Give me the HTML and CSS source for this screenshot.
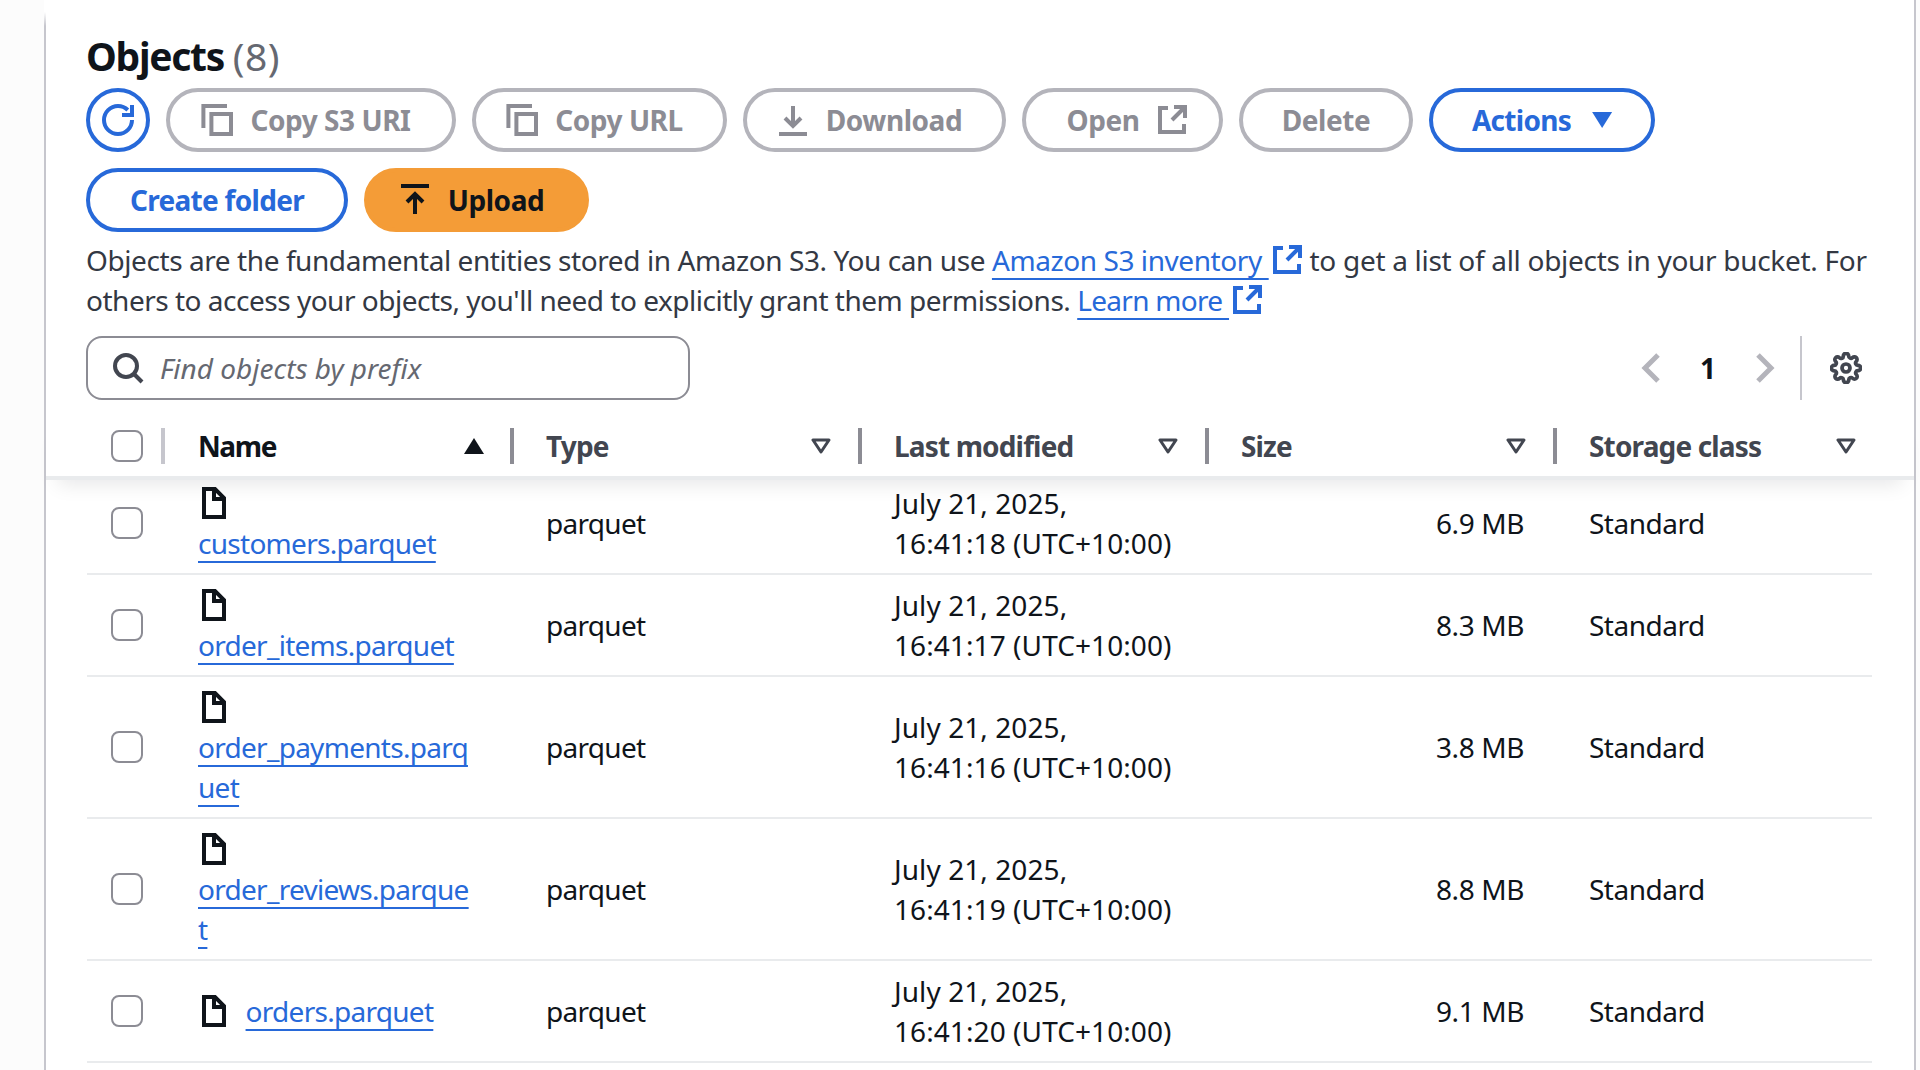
FILE: index.html
```html
<!DOCTYPE html>
<html lang="en">
<head>
    <meta charset="UTF-8">
    <title>Objects - S3 bucket</title>
    <link rel="stylesheet" href="styles.css">
</head>
<body>
    <svg class="sprite" xmlns="http://www.w3.org/2000/svg">
        <symbol id="i-refresh" viewBox="0 0 16 16"><path d="M15 8c0 3.870-3.130 7-7 7s-7-3.130-7-7 3.130-7 7-7c1.900 0 3.600.75 4.900 2"/><path d="M15 .5v5h-5"/></symbol>
        <symbol id="i-copy" viewBox="0 0 16 16"><path d="M1.200 12V1H13"/><path d="M5.200 5H15v10H5.200z"/></symbol>
        <symbol id="i-download" viewBox="0 0 16 16"><path d="M1 15h14"/><path d="M8 11V1"/><path d="M4 7l4 4 4-4"/></symbol>
        <symbol id="i-external" viewBox="0 0 16 16"><path d="M6 2H2v12h12v-4"/><path d="M9 1.500h5.500v5.500"/><path d="M14 2L8 8"/></symbol>
        <symbol id="i-upload" viewBox="0 0 16 16"><path d="M1 1h14"/><path d="M8 15V5"/><path d="M4 9l4-4 4 4"/></symbol>
        <symbol id="i-file" viewBox="0 0 16 16"><path d="M8.500 1H3v14h10V5.500z"/><path d="M8 1v5h5"/></symbol>
        <symbol id="i-search" viewBox="0 0 16 16"><circle cx="7" cy="7" r="5.500"/><path d="M11 11l4 4"/></symbol>
        <symbol id="i-left" viewBox="0 0 16 16"><path d="M11 1.500L4.500 8l6.500 6.500"/></symbol>
        <symbol id="i-right" viewBox="0 0 16 16"><path d="M5 1.500L11.500 8 5 14.500"/></symbol>
        <symbol id="i-filter" viewBox="0 0 20 16"><path d="M2 2h16l-8 12z"/></symbol>
        <symbol id="i-gear" viewBox="0 0 24 24"><circle cx="12" cy="12" r="3"/><path d="M19.400 15a1.650 1.650 0 0 0 .33 1.820l.06.06a2 2 0 0 1 0 2.830 2 2 0 0 1-2.830 0l-.06-.06a1.650 1.650 0 0 0-1.820-.33 1.650 1.650 0 0 0-1 1.510V21a2 2 0 0 1-2 2 2 2 0 0 1-2-2v-.09A1.650 1.650 0 0 0 9 19.400a1.650 1.650 0 0 0-1.820.33l-.06.06a2 2 0 0 1-2.830 0 2 2 0 0 1 0-2.830l.06-.06a1.650 1.650 0 0 0 .33-1.820 1.650 1.650 0 0 0-1.510-1H3a2 2 0 0 1-2-2 2 2 0 0 1 2-2h.09A1.650 1.650 0 0 0 4.600 9a1.650 1.650 0 0 0-.33-1.820l-.06-.06a2 2 0 0 1 0-2.830 2 2 0 0 1 2.830 0l.06.06a1.650 1.650 0 0 0 1.820.33H9a1.650 1.650 0 0 0 1-1.510V3a2 2 0 0 1 2-2 2 2 0 0 1 2 2v.09a1.650 1.650 0 0 0 1 1.510 1.650 1.650 0 0 0 1.820-.33l.06-.06a2 2 0 0 1 2.830 0 2 2 0 0 1 0 2.830l-.06.06a1.650 1.650 0 0 0-.33 1.820V9a1.650 1.650 0 0 0 1.510 1H21a2 2 0 0 1 2 2 2 2 0 0 1-2 2h-.09a1.650 1.650 0 0 0-1.510 1z"/></symbol>
    </svg>

    <main class="panel">
        <h1 class="title">Objects <span class="count">(8)</span></h1>

        <div class="toolbar">
            <button class="btn btn-icon btn-normal"><svg class="icon"><use href="#i-refresh"/></svg></button>
            <button class="btn btn-disabled btn-lead btn-copy-uri"><svg class="icon"><use href="#i-copy"/></svg>Copy S3 URI</button>
            <button class="btn btn-disabled btn-lead btn-copy-url"><svg class="icon"><use href="#i-copy"/></svg>Copy URL</button>
            <button class="btn btn-disabled btn-lead btn-download"><svg class="icon"><use href="#i-download"/></svg>Download</button>
            <button class="btn btn-disabled btn-open">Open<svg class="icon"><use href="#i-external"/></svg></button>
            <button class="btn btn-disabled btn-delete">Delete</button>
            <button class="btn btn-normal btn-actions">Actions<span class="caret-down"></span></button>
        </div>
        <div class="toolbar">
            <button class="btn btn-normal btn-create">Create folder</button>
            <button class="btn btn-primary btn-lead btn-upload"><svg class="icon"><use href="#i-upload"/></svg>Upload</button>
        </div>

        <p class="description">Objects are the fundamental entities stored in Amazon S3. You can use <a href="#">Amazon S3 inventory </a><svg class="icon icon-link"><use href="#i-external"/></svg> <span class="desc-tail">to get a list of all objects in your bucket. For</span> <span class="desc-second">others to access your objects, you'll need to explicitly grant them permissions.</span> <a class="link-tight" href="#">Learn more </a><svg class="icon icon-link"><use href="#i-external"/></svg></p>

        <div class="filter-bar">
            <div class="search">
                <svg class="icon"><use href="#i-search"/></svg>
                <span class="placeholder">Find objects by prefix</span>
            </div>
            <div class="pager">
                <svg class="icon icon-pager"><use href="#i-left"/></svg>
                <span class="page-num">1</span>
                <svg class="icon icon-pager"><use href="#i-right"/></svg>
            </div>
            <div class="prefs">
                <svg class="icon icon-gear"><use href="#i-gear"/></svg>
            </div>
        </div>

        <div class="table-head">
            <div class="head-row">
                <div class="head-cell head-check"><span class="checkbox"></span></div>
                <div class="head-cell head-name"><span class="name-label">Name</span><span class="sort-up"></span></div>
                <div class="head-cell">Type<svg class="sort-down"><use href="#i-filter"/></svg></div>
                <div class="head-cell">Last modified<svg class="sort-down"><use href="#i-filter"/></svg></div>
                <div class="head-cell">Size<svg class="sort-down"><use href="#i-filter"/></svg></div>
                <div class="head-cell">Storage class<svg class="sort-down"><use href="#i-filter"/></svg></div>
            </div>
        </div>

        <div class="table-body">
            <div class="row">
                <div class="cell"><span class="checkbox"></span></div>
                <div class="cell cell-name"><div class="name-wrap"><svg class="icon icon-file"><use href="#i-file"/></svg> <a href="#">customers.parquet</a></div></div>
                <div class="cell cell-type">parquet</div>
                <div class="cell cell-date"><span>July 21, 2025,<br>16:41:18 (UTC+10:00)</span></div>
                <div class="cell cell-size">6.9 MB</div>
                <div class="cell cell-class">Standard</div>
            </div>
            <div class="row">
                <div class="cell"><span class="checkbox"></span></div>
                <div class="cell cell-name"><div class="name-wrap"><svg class="icon icon-file"><use href="#i-file"/></svg> <a href="#">order_items.parquet</a></div></div>
                <div class="cell cell-type">parquet</div>
                <div class="cell cell-date"><span>July 21, 2025,<br>16:41:17 (UTC+10:00)</span></div>
                <div class="cell cell-size">8.3 MB</div>
                <div class="cell cell-class">Standard</div>
            </div>
            <div class="row">
                <div class="cell"><span class="checkbox"></span></div>
                <div class="cell cell-name"><div class="name-wrap"><svg class="icon icon-file"><use href="#i-file"/></svg> <a href="#">order_payments.parquet</a></div></div>
                <div class="cell cell-type">parquet</div>
                <div class="cell cell-date"><span>July 21, 2025,<br>16:41:16 (UTC+10:00)</span></div>
                <div class="cell cell-size">3.8 MB</div>
                <div class="cell cell-class">Standard</div>
            </div>
            <div class="row">
                <div class="cell"><span class="checkbox"></span></div>
                <div class="cell cell-name"><div class="name-wrap"><svg class="icon icon-file"><use href="#i-file"/></svg> <a href="#">order_reviews.parquet</a></div></div>
                <div class="cell cell-type">parquet</div>
                <div class="cell cell-date"><span>July 21, 2025,<br>16:41:19 (UTC+10:00)</span></div>
                <div class="cell cell-size">8.8 MB</div>
                <div class="cell cell-class">Standard</div>
            </div>
            <div class="row">
                <div class="cell"><span class="checkbox"></span></div>
                <div class="cell cell-name"><div class="name-wrap"><svg class="icon icon-file"><use href="#i-file"/></svg> <a href="#">orders.parquet</a></div></div>
                <div class="cell cell-type">parquet</div>
                <div class="cell cell-date"><span>July 21, 2025,<br>16:41:20 (UTC+10:00)</span></div>
                <div class="cell cell-size">9.1 MB</div>
                <div class="cell cell-class">Standard</div>
            </div>
        </div>
    </main>
</body>
</html>
```

FILE: styles.css
```css
/* General page styling */
* {
    box-sizing: border-box;
}

html, body {
    margin: 0;
    height: 100%;
    overflow: hidden;
}

body {
    background-color: #fcfcfc;
    font-family: "Noto Sans", Arial, sans-serif;
    font-size: 28px;
    line-height: 40px;
    color: #0f141a;
    padding-left: 44px;
    padding-right: 4px;
}

a {
    color: #2769d9;
    text-decoration: underline;
    text-decoration-thickness: 2px;
    text-underline-offset: 7px;
    text-decoration-skip-ink: none;
}

.sprite {
    display: none;
}

.icon {
    width: 32px;
    height: 32px;
    fill: none;
    stroke: currentColor;
    stroke-width: 2;
    flex: none;
}

/* the left rule fades out near the top of the page */
.panel {
    height: 100%;
    background: linear-gradient(to bottom, white 12px, #c6c6cd 26px) left top / 2px 100% no-repeat, white;
    border-right: 2px solid #c6c6cd;
    padding: 30px 0 0 42px;
}

.title {
    margin: 0 0 6px;
    font-size: 39px;
    line-height: 52px;
    font-weight: 700;
    letter-spacing: -1.3px;
}

.count {
    font-weight: 400;
    letter-spacing: 0.5px;
    color: #656871;
}

/* Buttons */
.toolbar {
    display: flex;
    gap: 16px;
    margin-bottom: 16px;
}

.btn {
    display: flex;
    align-items: center;
    justify-content: center;
    gap: 17px;
    height: 64px;
    padding: 0;
    border: 4px solid;
    border-radius: 32px;
    background-color: white;
    font-family: inherit;
    font-size: 28px;
    font-weight: 700;
    letter-spacing: -0.45px;
}

.btn-normal {
    border-color: #2769d9;
    color: #2769d9;
}

.btn-disabled {
    border-color: #b4b4bb;
    color: #8c8c94;
}

.btn-primary {
    border-color: #f49c37;
    background-color: #f49c37;
    color: #0f141a;
}

.btn-lead { padding-right: 10px; }

.btn-icon { width: 64px; }
.btn-copy-uri { width: 290px; }
.btn-copy-url { width: 255px; }
.btn-download { width: 263px; }
.btn-open { width: 201px; padding-left: 10px; }
.btn-delete { width: 174px; }
.btn-actions { width: 226px; letter-spacing: -0.7px; }
.btn-create { width: 262px; letter-spacing: -0.7px; }
.btn-upload { width: 225px; }

.caret-down {
    width: 20px;
    height: 16px;
    margin-left: 4px;
    background-color: #2769d9;
    clip-path: polygon(0 0, 100% 0, 50% 100%);
}

.description {
    margin: -8px 40px 0 0;
    color: #333843;
    letter-spacing: -0.42px;
}

.desc-tail {
    letter-spacing: -0.3px;
}

.desc-second {
    letter-spacing: -0.49px;
}

.link-tight {
    letter-spacing: -0.7px;
}

.icon-link {
    margin-left: 2px;
    color: #2769d9;
    vertical-align: -5px;
}

/* Search and pagination */
.filter-bar {
    display: flex;
    align-items: center;
    margin-top: 16px;
    height: 64px;
    padding-right: 52px;
}

.search {
    display: flex;
    align-items: center;
    gap: 16px;
    width: 604px;
    height: 64px;
    padding: 0 24px;
    border: 2px solid #8c8c94;
    border-radius: 16px;
    color: #424650;
}

.placeholder {
    font-style: italic;
    color: #656871;
}

.pager {
    display: flex;
    align-items: center;
    gap: 27px;
    margin-left: auto;
    padding-right: 20px;
    color: #b4b4bb;
}

.icon-pager {
    stroke-width: 2.500;
}

.page-num {
    width: 26px;
    text-align: center;
    font-weight: 700;
    color: #0f141a;
}

.prefs {
    display: flex;
    align-items: center;
    height: 64px;
    padding-left: 28px;
    border-left: 2px solid #c6c6cd;
    color: #424650;
}

.icon-gear {
    stroke-width: 2.800;
}

/* Table */
.table-head {
    position: relative;
    z-index: 1;
    margin: 13px 0 -7px -40px;
    padding: 0 0 0 41px;
    height: 67px;
    background-color: white;
    border-bottom: 4px solid #e9ebed;
    box-shadow: 0 16px 20px -12px rgba(0, 7, 22, 0.1);
}

.head-row {
    display: grid;
    grid-template-columns: 78px 345px 348px 347px 348px 330px;
}

.head-cell {
    display: flex;
    align-items: center;
    justify-content: space-between;
    height: 36px;
    margin-top: 15px;
    padding: 0 27px 0 32px;
    border-left: 4px solid #8c8c94;
    font-weight: 700;
    letter-spacing: -0.85px;
    color: #424650;
}

.head-check {
    border-left: none;
    border-right: 4px solid #c6c6cd;
    justify-content: flex-start;
    padding: 0 0 0 24px;
}

.head-name {
    border-left: none;
    color: #0f141a;
    padding: 0 26px 0 33px;
}

.name-label {
    letter-spacing: -1.4px;
}

.sort-up,
.sort-down {
    width: 20px;
    height: 16px;
    flex: none;
}

.sort-up {
    background-color: #0f141a;
    clip-path: polygon(50% 0, 100% 100%, 0 100%);
}

.sort-down {
    fill: none;
    stroke: #424650;
    stroke-width: 3;
    stroke-linejoin: round;
}

.checkbox {
    display: block;
    width: 32px;
    height: 32px;
    border: 2px solid #8c8c94;
    border-radius: 8px;
    background-color: white;
}

.table-body {
    margin: 0 42px 0 1px;
}

.row {
    display: grid;
    grid-template-columns: 78px 345px 348px 347px 348px 1fr;
    padding: 10px 0;
    border-bottom: 2px solid #e9ebed;
}

.cell {
    display: flex;
    align-items: center;
    padding-left: 36px;
}

.cell:first-child {
    padding-left: 24px;
}

.cell-name {
    padding-left: 33px;
}

.name-wrap {
    width: 277px;
    overflow-wrap: break-word;
    letter-spacing: -0.72px;
}

.icon-file {
    vertical-align: -5px;
    margin-right: 9px;
}

.cell-type {
    letter-spacing: -0.7px;
}

.cell-date {
    letter-spacing: 0.08px;
}

.cell-size {
    justify-content: flex-end;
    padding-right: 29px;
    letter-spacing: -0.4px;
}

.cell-class {
    letter-spacing: -0.5px;
}
```
